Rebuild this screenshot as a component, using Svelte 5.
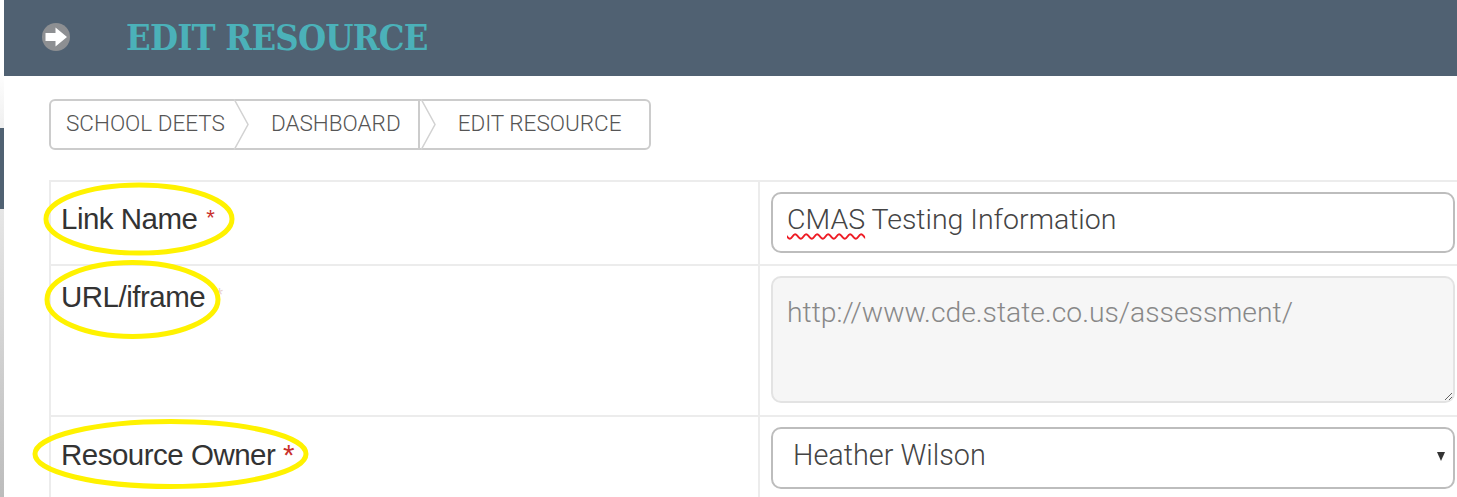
<script lang="ts">
	const crumbs = ['SCHOOL DEETS', 'DASHBOARD', 'EDIT RESOURCE']
</script>

<!-- MARKUP -------------------------------------------- -->
<div class="page">
	<aside class="strip">
		<div class="strip-top"></div>
		<div class="strip-dark"></div>
		<div class="strip-bottom"></div>
	</aside>

	<main class="main">
		<header class="header">
			<svg class="back" viewBox="0 0 30 30" width="30" height="30" aria-hidden="true">
				<circle cx="15" cy="15" r="14" fill="#8d8f92" />
				<path d="M4.500 11h10V5.500L26 15 14.500 24.500V19h-10z" fill="#fff" />
			</svg>
			<h1>EDIT RESOURCE</h1>
		</header>

		<nav class="crumbs">
			{#each crumbs as crumb, i}
				<div class="crumb">
					<span>{crumb}</span>
					{#if i < crumbs.length - 1}
						<svg class="chevron" viewBox="0 0 16 51" width="16" height="51" aria-hidden="true">
							<path d="M1 0l14 25.500L1 51" fill="#fff" stroke="#d2d2d2" stroke-width="1.500" />
						</svg>
					{/if}
				</div>
			{/each}
		</nav>

		<section class="form">
			<div class="cell label-cell row-1">
				<label for="link">Link Name <b class="thin">*</b></label>
			</div>
			<div class="cell field-cell row-1">
				<div id="link" class="control text"><span class="typo">CMAS</span> Testing Information</div>
			</div>

			<div class="cell label-cell row-2">
				<label for="url">URL/iframe <b class="faint">*</b></label>
			</div>
			<div class="cell field-cell row-2">
				<textarea id="url" class="control area" disabled spellcheck="false">http://www.cde.state.co.us/assessment/</textarea>
			</div>

			<div class="cell label-cell row-3">
				<label for="owner">Resource Owner <b>*</b></label>
			</div>
			<div class="cell field-cell row-3">
				<div class="select-wrap">
					<select id="owner" class="control select">
						<option>Heather Wilson</option>
					</select>
				</div>
			</div>

			<!-- hand drawn highlights over the labels -->
			<svg class="marks" viewBox="0 0 1408 320" width="1408" height="320" aria-hidden="true">
				<ellipse cx="95" cy="38" rx="93" ry="34" />
				<ellipse cx="88.500" cy="118.500" rx="85.500" ry="37" />
				<ellipse cx="126.500" cy="273" rx="135.500" ry="32.500" />
			</svg>
		</section>
	</main>
</div>

<!-- CSS ----------------------------------------------- -->
<style>
	:global(body) {
		overflow: hidden;
		background: #fff;
	}

	.page {
		--clr-slate: #506172;
		--clr-line: #ececec;
		width: 1457px;
		height: 497px;
		display: flex;
		overflow: hidden;
		color: #333;
		font-family: 'Liberation Sans', Arial, sans-serif;
	}

	/* STRIP ------------------------------------------------ */
	.strip {
		flex: 0 0 4px;
		display: flex;
		flex-direction: column;
	}
	.strip-top {
		height: 128px;
		background: linear-gradient(#fff 70px, #efefef);
	}
	.strip-dark {
		height: 81px;
		background: var(--clr-slate);
	}
	.strip-bottom {
		flex: 1;
		background: linear-gradient(#e6e6e6, #bcbcbc);
	}

	/* HEADER ----------------------------------------------- */
	.main {
		flex: 1;
		min-width: 0;
	}
	.header {
		height: 76px;
		padding: 0 0 2px 37px;
		box-sizing: border-box;
		display: flex;
		align-items: center;
		background: var(--clr-slate);
	}
	.back {
		filter: blur(0.7px);
	}
	h1 {
		margin: 0 0 0 55px;
		color: #4bb1b9;
		font-family: 'DejaVu Serif', serif;
		font-size: 36px;
		font-stretch: condensed;
		font-weight: 700;
		letter-spacing: -0.8px;
	}

	/* BREADCRUMBS ------------------------------------------ */
	.crumbs {
		box-sizing: border-box;
		width: fit-content;
		height: 51px;
		margin: 23px 0 30px 45px;
		display: flex;
		border: 2px solid #ccc;
		border-radius: 6px;
	}
	.crumb {
		position: relative;
		padding: 0 8px 4px 15px;
		display: flex;
		align-items: center;
		color: #555;
		font-family: Roboto, sans-serif;
		font-size: 22.500px;
		font-weight: 300;
	}
	.crumb + .crumb {
		padding-left: 38px;
	}
	.crumb:nth-child(2) {
		border-right: 2px solid #ccc;
		padding-right: 17px;
	}
	.crumb:nth-child(3) {
		padding-right: 27px;
	}
	.chevron {
		position: absolute;
		top: -2px;
		right: -16px;
		z-index: 1;
	}
	.crumb:nth-child(2) .chevron {
		right: -18px;
	}

	/* FORM ------------------------------------------------- */
	.form {
		position: relative;
		margin-left: 45px;
		display: grid;
		grid-template-columns: 709px 1fr;
		grid-template-rows: 84px 151px 90px;
		border-top: 2px solid var(--clr-line);
		border-left: 2px solid var(--clr-line);
	}
	.cell {
		border-bottom: 2px solid var(--clr-line);
	}
	.row-3 {
		border-bottom: 0;
	}
	.label-cell {
		padding: 18px 10px;
		border-right: 2px solid var(--clr-line);
		font-size: 29.500px;
		letter-spacing: -0.5px;
		line-height: 36px;
	}
	.row-2.label-cell {
		padding-top: 11px;
	}
	.row-3.label-cell {
		padding-top: 20px;
	}
	label {
		white-space: nowrap;
	}
	label b {
		color: #c9302c;
		font-weight: 400;
	}
	label .thin {
		margin-left: 1px;
		font-size: 22px;
		vertical-align: 4px;
	}
	label .faint {
		margin-left: 3px;
		color: #e9cfcf;
		font-size: 18px;
		vertical-align: 6px;
	}

	.field-cell {
		padding: 10px 2px 0 11px;
	}
	.control {
		box-sizing: border-box;
		display: block;
		width: 684px;
		background: #fff;
		border: 2px solid #bdbdbd;
		border-radius: 10px;
		color: #444;
		font-family: Roboto, sans-serif;
		font-size: 28.500px;
		font-weight: 300;
	}
	.text {
		height: 61px;
		padding: 0 14px;
		line-height: 52px;
	}
	.typo {
		text-decoration: underline wavy #ee1c25 1.500px;
		text-underline-offset: 4px;
	}
	.area {
		height: 127px;
		margin: 0;
		padding: 18px 14px;
		background: #f6f6f6;
		border-color: #e3e3e3;
		color: #888;
		font-size: 28.300px;
		resize: both;
		opacity: 1;
		outline: none;
	}
	.select-wrap {
		position: relative;
		width: 684px;
		&::after {
			content: '';
			position: absolute;
			top: 25px;
			right: 10px;
			border-top: 9px solid #333;
			border-left: 4.500px solid transparent;
			border-right: 4.500px solid transparent;
		}
	}
	.select {
		height: 62px;
		padding: 0 20px 6px;
		font-size: 28.800px;
		appearance: none;
	}

	/* MARKS ------------------------------------------------ */
	.marks {
		position: absolute;
		top: -1px;
		left: -7px;
		pointer-events: none;
		overflow: visible;
		ellipse {
			fill: none;
			stroke: #fff200;
			stroke-width: 5;
		}
	}
</style>
